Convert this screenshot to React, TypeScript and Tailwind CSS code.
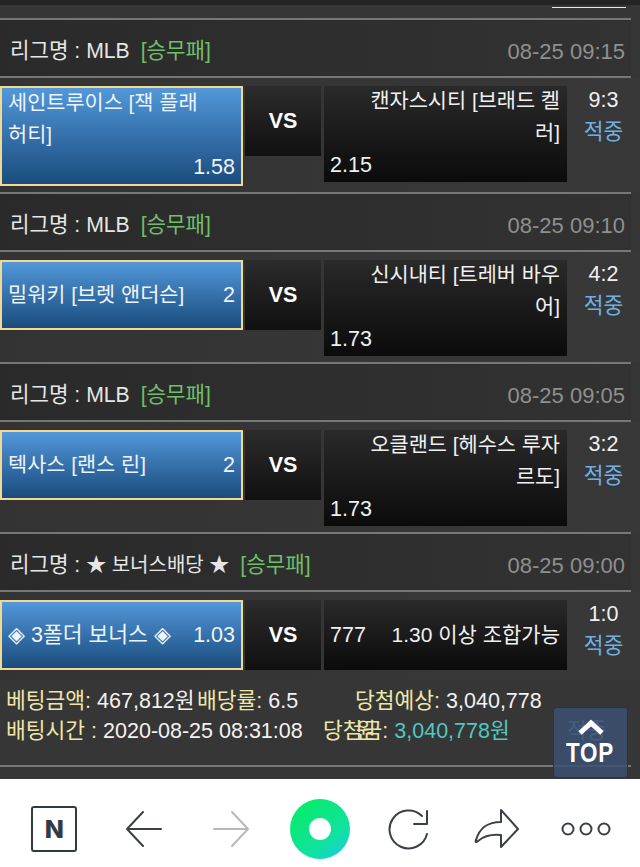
import React from "react";

const font = { fontFamily: '"Liberation Sans", "Noto Sans CJK KR", sans-serif' };

type Side = { lines: string[]; odds: string };
type MatchProps = {
  league: string;
  kind: string;
  time: string;
  left: Side;
  right: Side;
  score: string;
  bottom: string;
};

function Header({ league, kind, time, small }: { league: string; kind: string; time: string; small?: boolean }) {
  return (
    <div className="flex h-[58px] w-[631px] items-center justify-between border-b-2 border-[#777] bg-gradient-to-r from-[#2a2a2a] to-[#323232] pl-[10px] pr-[6px] pt-[6px] text-[21.2px]">
      <div className="flex items-center">
        <span className="text-[#e6e6e6]">
          리그명 : <span className={small ? "text-[20px]" : ""}>{league}</span>
        </span>
        <span className="ml-[11px] text-[#6fbf6a]">[{kind}]</span>
      </div>
      <span className="text-[22px] text-[#8f8f8f]">{time}</span>
    </div>
  );
}

function LeftBox({ side }: { side: Side }) {
  const cls =
    "w-[243px] shrink-0 border-2 border-[#f2d98f] bg-gradient-to-b from-[#5298da] to-[#1a4c7e] text-[21.5px] leading-[32px] text-[#eef4fa]";
  if (side.lines.length > 1) {
    return (
      <div className={cls + " h-[100px] px-[6px]"}>
        <div className="-mt-[1px] whitespace-nowrap">
          {side.lines.map((l) => (
            <div key={l} className="h-[32px] text-[20.8px]">{l}</div>
          ))}
          <div className="text-right">{side.odds}</div>
        </div>
      </div>
    );
  }
  return (
    <div className={cls + " flex h-[70px] items-center justify-between px-[6px]"}>
      <span className={"whitespace-nowrap " + (side.lines[0].startsWith("◈") ? "" : "text-[20.8px]")}>{side.lines[0]}</span>
      <span>{side.odds}</span>
    </div>
  );
}

function RightBox({ side, short }: { side: Side; short?: boolean }) {
  const cls =
    "w-[243px] shrink-0 bg-gradient-to-b from-[#2a2a2a] to-[#0b0b0b] pl-[6px] pr-[7px] text-[21.5px] leading-[32px] text-[#f0f0f0]";
  if (short) {
    return (
      <div className={cls + " flex h-[70px] items-center justify-between"}>
        <span>{side.odds}</span>
        <span className="whitespace-nowrap text-[21px]">{side.lines[0]}</span>
      </div>
    );
  }
  return (
    <div className={cls + " h-[96px]"}>
      <div className="-mt-[1px] whitespace-nowrap">
        {side.lines.map((l) => (
          <div key={l} className="h-[32px] text-right text-[20.8px]">
            {l}
          </div>
        ))}
        <div>{side.odds}</div>
      </div>
    </div>
  );
}

function Versus() {
  return (
    <>
      <div className="ml-[2px] flex h-[70px] w-[76px] shrink-0 items-center justify-center bg-gradient-to-b from-[#2c2c2c] to-[#101010] text-[21.5px] font-bold text-white">
        VS
      </div>
      <div className="w-[3px] shrink-0" />
    </>
  );
}

function Score({ score }: { score: string }) {
  return (
    <div className="-mt-[2px] flex w-[73px] shrink-0 flex-col items-center text-[21.5px] leading-[32px]">
      <span className="text-[#f0f0f0]">{score}</span>
      <span className="text-[#6fb0e4]">적중</span>
    </div>
  );
}

function Match({ league, kind, time, left, right, score, bottom }: MatchProps) {
  return (
    <div>
      <Header league={league} kind={kind} time={time} />
      <div className={"flex items-start bg-gradient-to-r from-[#333] to-[#383838] pt-2 " + bottom}>
        <LeftBox side={left} />
        <Versus />
        <RightBox side={right} />
        <Score score={score} />
      </div>
      <div className="h-[2px] w-[631px] bg-[#777]" />
    </div>
  );
}

function BottomBar() {
  return (
    <div className="grid h-[88px] shrink-0 grid-cols-7 items-center bg-white px-[10px] pt-[12px]">
      <div className="flex justify-center">
        <div
          className="flex h-[46px] w-[46px] items-center justify-center rounded-[3px] border-2 border-[#333a44] text-[25px] font-extrabold leading-none text-[#333a44]"
          style={{ fontFamily: "Inter, sans-serif" }}
        >
          N
        </div>
      </div>
      <div className="flex justify-center pl-[3px]">
        <svg width="36" height="36" viewBox="0 0 36 36" fill="none" stroke="#3b4046" strokeWidth="2" strokeLinecap="round" strokeLinejoin="round">
          <path d="M17 1 L1 18 L17 35 M1 18 H35" />
        </svg>
      </div>
      <div className="flex justify-center">
        <svg width="36" height="36" viewBox="0 0 36 36" fill="none" stroke="#b8b8b8" strokeWidth="2" strokeLinecap="round" strokeLinejoin="round">
          <path d="M19 1 L35 18 L19 35 M1 18 H35" />
        </svg>
      </div>
      <div className="flex justify-center">
        <svg width="60" height="60" viewBox="0 0 60 60">
          <defs>
            <linearGradient id="gr" x1="0.2" y1="0.1" x2="0.9" y2="1">
              <stop offset="0" stopColor="#08ea6c" />
              <stop offset="0.65" stopColor="#10e2a0" />
              <stop offset="1" stopColor="#1cc8e0" />
            </linearGradient>
          </defs>
          <circle cx="30" cy="30" r="30" fill="url(#gr)" />
          <circle cx="30" cy="30" r="11" fill="#fff" />
        </svg>
      </div>
      <div className="flex justify-center">
        <svg width="44" height="44" viewBox="0 0 44 44" fill="none" stroke="#3b4046" strokeWidth="2" strokeLinecap="round" strokeLinejoin="round">
          <path d="M40 27 A19 19 0 1 1 35 9" />
          <path d="M27 17 H40 V4" />
        </svg>
      </div>
      <div className="flex justify-center">
        <svg width="46" height="42" viewBox="0 0 46 42" fill="none" stroke="#3b4046" strokeWidth="2" strokeLinecap="round" strokeLinejoin="round">
          <path d="M27 2 L44 21 L27 39 V27 C17 26 10 28 4 33 C2 35 1 34 2 32 C5 22 11 14 27 14 Z" />
        </svg>
      </div>
      <div className="flex justify-center">
        <svg width="50" height="16" viewBox="0 0 50 16" fill="none" stroke="#3b4046" strokeWidth="2">
          <circle cx="7" cy="8" r="5.5" />
          <circle cx="25" cy="8" r="5.5" />
          <circle cx="43" cy="8" r="5.5" />
        </svg>
      </div>
    </div>
  );
}

export default function App() {
  return (
    <div className="flex h-[867px] w-[640px] flex-col overflow-hidden bg-[#363636]" style={font}>
      <div className="relative min-h-0 flex-1">
        <div className="h-[5px] bg-[#242424]" />
        <div className="flex h-[13px] justify-end pr-[14px] pt-[2px]">
          <div className="h-px w-[74px] bg-[#e8e8e8]" />
        </div>
        <div className="h-[2px] w-[631px] bg-[#777]" />

        <Match
          league="MLB"
          kind="승무패"
          time="08-25 09:15"
          left={{ lines: ["세인트루이스 [잭 플래", "허티]"], odds: "1.58" }}
          right={{ lines: ["캔자스시티 [브래드 켈", "러]"], odds: "2.15" }}
          score="9:3"
          bottom="h-[114px]"
        />
        <Match
          league="MLB"
          kind="승무패"
          time="08-25 09:10"
          left={{ lines: ["밀워키 [브렛 앤더슨]"], odds: "2" }}
          right={{ lines: ["신시내티 [트레버 바우", "어]"], odds: "1.73" }}
          score="4:2"
          bottom="h-[110px]"
        />
        <Match
          league="MLB"
          kind="승무패"
          time="08-25 09:05"
          left={{ lines: ["텍사스 [랜스 린]"], odds: "2" }}
          right={{ lines: ["오클랜드 [헤수스 루자", "르도]"], odds: "1.73" }}
          score="3:2"
          bottom="h-[110px]"
        />

        <Header small league="★ 보너스배당 ★" kind="승무패" time="08-25 09:00" />
        <div className="flex h-[88px] items-start bg-gradient-to-r from-[#333] to-[#383838] pt-[8px]">
          <LeftBox side={{ lines: ["◈ 3폴더 보너스 ◈"], odds: "1.03" }} />
          <Versus />
          <RightBox short side={{ lines: ["1.30 이상 조합가능"], odds: "777" }} />
          <Score score="1:0" />
        </div>

        <div className="relative h-[85px] pl-[6px] pt-[6px] text-[21.5px] leading-[30px] text-[#f2f2f2]">
          <div className="flex h-[30px] whitespace-nowrap">
            <span className="w-[191px]"><span className="text-[#eee6a8]">베팅금액:</span> 467,812원</span>
            <span className="w-[158px]"><span className="text-[#eee6a8]">배당률:</span> 6.5</span>
            <span><span className="text-[#eee6a8]">당첨예상:</span> 3,040,778</span>
          </div>
          <div className="flex h-[30px] whitespace-nowrap">
            <span className="w-[317px]"><span className="text-[#eee6a8]">배팅시간 :</span> 2020-08-25 08:31:08</span>
            <span><span className="text-[#eee6a8]">당첨금:</span> <span className="text-[#4fc9be]">3,040,778원</span></span>
          </div>
          <span className="absolute left-[356px] top-[36px] text-[#eee6a8]">원</span>
          <span className="absolute left-[567px] top-[36px] text-[#6fb0e4]">적중</span>
        </div>
        <div className="h-[2px] w-[631px] bg-[#777]" />

        <div className="absolute left-[553px] top-[707px] flex h-[71px] w-[75px] flex-col items-center rounded-[4px] border border-[#2a3346] bg-[#3c5071]/85 pt-[11px]">
          <svg width="26" height="16" viewBox="0 0 26 16" fill="none" stroke="#fff" strokeWidth="5">
            <path d="M2 14 L13 4 L24 14" />
          </svg>
          <span className="mt-[4px] scale-x-[0.8] text-[28px] font-bold leading-[28px] tracking-[1px] text-white">TOP</span>
        </div>
      </div>
      <BottomBar />
    </div>
  );
}
